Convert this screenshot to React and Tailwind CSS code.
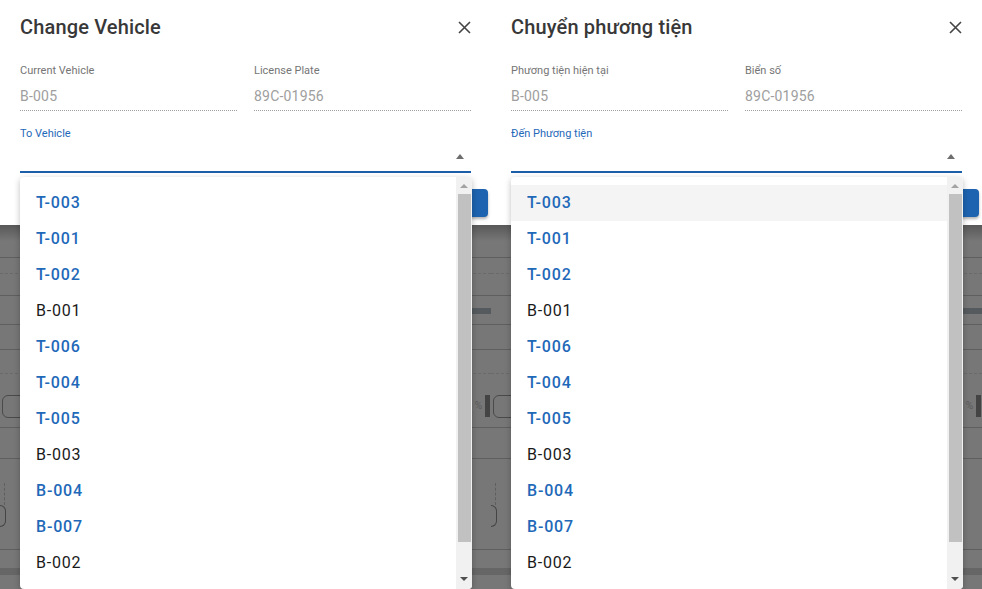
import React from "react";

const items = [
  { code: "T-003", blue: true },
  { code: "T-001", blue: true },
  { code: "T-002", blue: true },
  { code: "B-001", blue: false },
  { code: "T-006", blue: true },
  { code: "T-004", blue: true },
  { code: "T-005", blue: true },
  { code: "B-003", blue: false },
  { code: "B-004", blue: true },
  { code: "B-007", blue: true },
  { code: "B-002", blue: false },
];

const CloseIcon = () => (
  <svg width="13" height="13" viewBox="0 0 13 13" fill="none">
    <path d="M1 1L12 12M12 1L1 12" stroke="#444" strokeWidth="1.6" />
  </svg>
);

const ReadField = ({ label, value }) => (
  <div>
    <div className="text-[11px] leading-[14px] text-[#757575]">{label}</div>
    <div className="mt-[8px] pb-[4px] text-[14px] leading-[20px] tracking-[0.2px] text-[#9e9e9e] border-b border-dotted border-[#9e9e9e]">
      {value}
    </div>
  </div>
);

// trang phía sau bị làm mờ
const DimmedPage = () => (
  <div className="flex-1 flex flex-col bg-[#777777]">
    <div className="h-[33px] flex flex-col border-b border-[#5f5f5f]">
      <div className="h-[16px] bg-gradient-to-b from-[#585858] to-[#777777]" />
    </div>
    <div className="h-[16px] border-b border-dashed border-[#6a6a6a]" />
    <div className="h-[22px] border-b border-[#5f5f5f]" />
    <div className="h-[29px] border-b border-[#5f5f5f] flex justify-end pt-[12px]">
      <div className="w-[19px] h-[6px] bg-[#555a5e]" />
    </div>
    <div className="h-[25px] border-b border-[#5f5f5f]" />
    <div className="h-[24px] border-b border-dashed border-[#6a6a6a]" />
    <div className="h-[54px] border-b border-[#5f5f5f] flex justify-between pt-[21px]">
      <div className="ml-[2px] w-[40px] h-[23px] border border-[#4a4a4a] rounded-md" />
      <div className="flex items-start gap-[3px] mr-[1px]">
        <span className="text-[10px] leading-[14px] text-[#5a5a5a] mt-[4px]">%</span>
        <div className="w-[5px] h-[22px] bg-[#444]" />
      </div>
    </div>
    <div className="h-[31px] border-b border-[#5f5f5f]" />
    <div className="h-[91px] border-b border-[#5f5f5f] pt-[24px]">
      <div className="ml-[4px] h-[22px] border-l border-dashed border-[#5f5f5f]" />
      <div className="w-[6px] h-[22px] border-r border-t border-b border-[#444] rounded-r-md" />
    </div>
    <div className="h-[18px]" />
    <div className="h-[7px] bg-[#666666]" />
  </div>
);

const Dropdown = ({ highlightFirst }) => (
  <div className="absolute left-[20px] top-[177px] w-[452px] h-[412px] bg-white rounded shadow-[0_2px_6px_rgba(0,0,0,0.25)] flex overflow-hidden">
    <div className="flex-1 pt-[8px]">
      {items.map((it, i) => (
        <div
          key={it.code}
          className={`h-[36px] flex items-center pl-[16px] text-[16px] tracking-[0.8px] ${
            i === 0 && highlightFirst ? "bg-[#f4f4f4]" : ""
          } ${it.blue ? "text-[#1f69b9] font-medium" : "text-[#1a1a1a]"}`}
        >
          {it.code}
        </div>
      ))}
    </div>
    <div className="w-[16px] bg-[#f1f1f1] flex flex-col items-center">
      <div className="h-[17px] flex items-center justify-center">
        <div className="w-0 h-0 border-l-[4px] border-r-[4px] border-b-[4px] border-l-transparent border-r-transparent border-b-[#a3a3a3]" />
      </div>
      <div className="w-[13px] h-[348px] bg-[#c1c1c1]" />
      <div className="flex-1 flex items-end justify-center pb-[8px]">
        <div className="w-0 h-0 border-l-[4px] border-r-[4px] border-t-[4px] border-l-transparent border-r-transparent border-t-[#505050]" />
      </div>
    </div>
  </div>
);

const Panel = ({ t, highlightFirst }) => (
  <div className="relative w-[491px] h-[589px] overflow-hidden flex flex-col">
    <div className="h-[225px] bg-white px-[20px] pt-[13px] flex flex-col">
      <div className="h-[28px] flex items-center justify-between">
        <h2 className="text-[20px] leading-[28px] font-medium tracking-[0.15px] text-[#383838]">{t.title}</h2>
        <CloseIcon />
      </div>
      <div className="mt-[23px] grid grid-cols-2 gap-x-[17px]">
        <ReadField label={t.current} value="B-005" />
        <ReadField label={t.plate} value="89C-01956" />
      </div>
      <div className="mt-[16px] text-[11px] leading-[14px] text-[#1f69b9]">{t.to}</div>
      <div className="h-[32px] border-b-2 border-[#1c5fa8] flex items-center justify-end pr-[7px]">
        <div className="w-0 h-0 border-l-[4px] border-r-[4px] border-b-[5px] border-l-transparent border-r-transparent border-b-[#6e6e6e]" />
      </div>
      <div className="mt-[16px] flex justify-end -mr-[17px]">
        <button className="w-[90px] h-[28px] rounded bg-[#1d63b0] shadow-[0_2px_3px_rgba(0,0,0,0.3)] text-white text-[13px]">
          {t.ok}
        </button>
      </div>
    </div>
    <DimmedPage />
    <Dropdown highlightFirst={highlightFirst} />
  </div>
);

export default function App() {
  return (
    <div className="w-[982px] h-[589px] flex overflow-hidden bg-white" style={{ fontFamily: "Roboto, 'Noto Sans', sans-serif" }}>
      <Panel
        t={{ title: "Change Vehicle", current: "Current Vehicle", plate: "License Plate", to: "To Vehicle", ok: "OK" }}
      />
      <Panel
        highlightFirst
        t={{ title: "Chuyển phương tiện", current: "Phương tiện hiện tại", plate: "Biển số", to: "Đến Phương tiện", ok: "OK" }}
      />
    </div>
  );
}
